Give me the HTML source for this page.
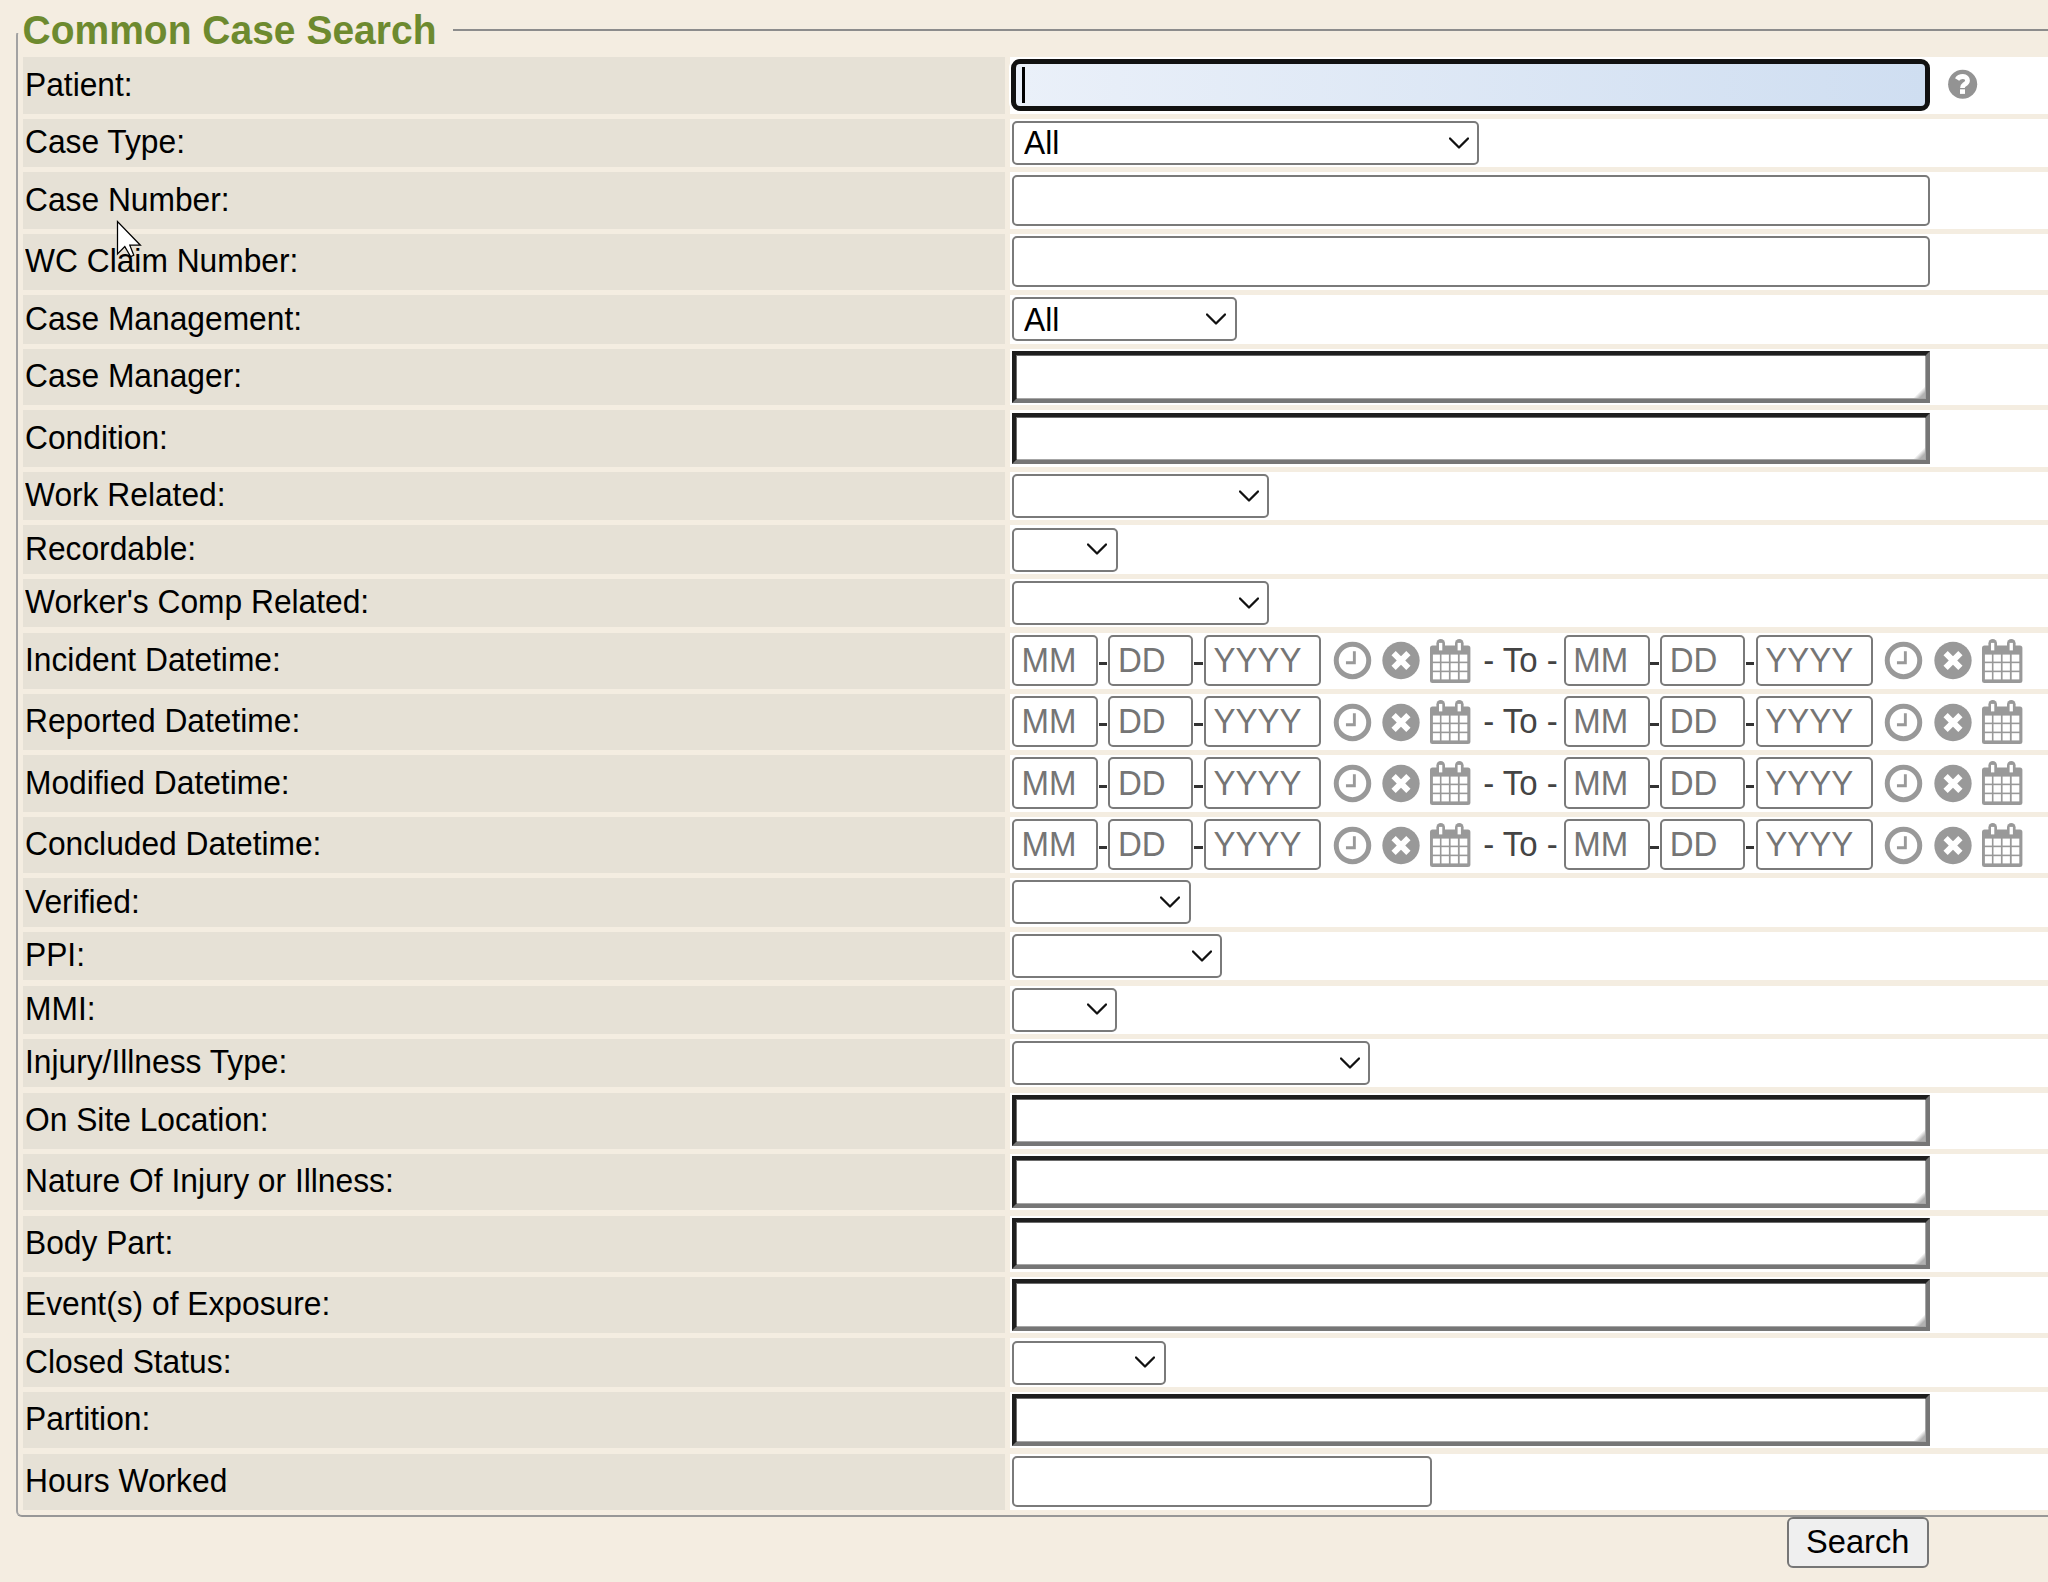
<!DOCTYPE html>
<html><head><meta charset="utf-8"><title>Common Case Search</title>
<style>
html,body{margin:0;padding:0;background:#f4ede1;}
body{width:2048px;height:1582px;overflow:hidden;}
#root{position:relative;width:2048px;height:1582px;overflow:hidden;background:#f4ede1;font-family:"Liberation Sans",sans-serif;color:#000;}
.a{position:absolute;}
.lc{position:absolute;left:22.5px;width:982.5px;background:#e6e1d6;}
.rc{position:absolute;left:1009.6px;width:1040px;background:#fff;}
.lb{position:absolute;left:25px;font-size:32px;line-height:36px;white-space:nowrap;transform:scale(0.992,1.04);transform-origin:0 28.5px;}
.sel{position:absolute;left:1012px;box-sizing:border-box;border:2px solid #7a7a7a;border-radius:5px;background:#fff;}
.txt{position:absolute;left:1012px;box-sizing:border-box;border:2px solid #7a7a7a;border-radius:5px;background:#fff;}
.ins{position:absolute;left:1012px;width:918px;box-sizing:border-box;border-style:solid;border-width:4px;border-color:#1e1e1e #767676 #767676 #1e1e1e;background:#fff;box-shadow:inset 1px 1px 0 rgba(30,30,30,0.65),inset -1px -1px 0 rgba(118,118,118,0.65);}
.grip{position:absolute;right:0;bottom:0;width:0;height:0;}
.ph{position:absolute;font-size:33px;line-height:36px;color:#757575;white-space:nowrap;transform:scaleY(1.04);transform-origin:0 28.5px;}
.dash{position:absolute;height:3px;width:8.3px;background:#333;}
.to{position:absolute;font-size:33px;line-height:36px;color:#444;white-space:nowrap;transform:scaleY(1.04);transform-origin:0 28.5px;}
</style></head><body><div id="root">

<div class="a" style="left:16px;top:29px;width:2100px;height:1488px;box-sizing:border-box;border:2px solid;border-color:#8c8c8c #999 #979797 #a2a2a2;border-radius:6px"></div>
<div class="a" style="left:12px;top:26px;width:441px;height:7px;background:#f4ede1"></div>
<div class="a" style="left:22.5px;top:8px;font-size:39px;line-height:45px;font-weight:bold;color:#6d8a2f;white-space:nowrap;transform:scaleY(1.04);transform-origin:0 36px">Common Case Search</div>
<div class="lc" style="top:57.45px;height:56.19px"></div>
<div class="rc" style="top:57.45px;height:56.19px"></div>
<div class="lb" style="top:66.69px">Patient:</div>
<div class="a" style="left:1011.3px;top:58.9px;width:918.7px;height:52px;box-sizing:border-box;border:5px solid #111;border-radius:9px;box-shadow:0 0 0 2px #fff;background:linear-gradient(to right,#eaf0f9,#cfdef1)"></div>
<div class="a" style="left:1022px;top:67px;width:2.5px;height:36px;background:#000"></div>
<svg class="a" style="left:1946px;top:68px" width="33" height="33" viewBox="-16.5 -16.5 33 33"><circle cx="0.15" cy="-0.3" r="14.55" fill="#939393"/><path d="M-5.4 -5 C-4 -7.4 -1.8 -8 0.4 -8 C3.4 -8 5 -6 5 -4 C5 -1.6 3 -0.6 1.4 0.5 C0 1.4 0 2.2 0 3.6" fill="none" stroke="#fff" stroke-width="4.8"/><rect x="-2.5" y="4.8" width="5" height="4.6" fill="#fff"/></svg>
<div class="lc" style="top:118.89px;height:48.35px"></div>
<div class="rc" style="top:118.89px;height:48.35px"></div>
<div class="lb" style="top:124.21px">Case Type:</div>
<div class="sel" style="top:120.99px;width:466.7px;height:44px"></div>
<svg class="a" style="left:1448.55px;top:136.69px" width="20" height="14" viewBox="0 0 20 14"><path d="M1 1.5 L10 10.5 L19 1.5" fill="none" stroke="#111" stroke-width="2.3" stroke-linecap="round" stroke-linejoin="round"/></svg>
<div class="lb" style="left:1024px;top:125.44px">All</div>
<div class="lc" style="top:172.48px;height:56.19px"></div>
<div class="rc" style="top:172.48px;height:56.19px"></div>
<div class="lb" style="top:181.73px">Case Number:</div>
<div class="txt" style="top:174.78px;width:918px;height:51px"></div>
<div class="lc" style="top:233.92px;height:56.19px"></div>
<div class="rc" style="top:233.92px;height:56.19px"></div>
<div class="lb" style="top:243.16px">WC Claim Number:</div>
<div class="txt" style="top:236.22px;width:918px;height:51px"></div>
<div class="lc" style="top:295.36px;height:48.35px"></div>
<div class="rc" style="top:295.36px;height:48.35px"></div>
<div class="lb" style="top:300.68px">Case Management:</div>
<div class="sel" style="top:297.46px;width:224.5px;height:44px"></div>
<svg class="a" style="left:1206.35px;top:313.16px" width="20" height="14" viewBox="0 0 20 14"><path d="M1 1.5 L10 10.5 L19 1.5" fill="none" stroke="#111" stroke-width="2.3" stroke-linecap="round" stroke-linejoin="round"/></svg>
<div class="lb" style="left:1024px;top:301.91px">All</div>
<div class="lc" style="top:348.95px;height:56.19px"></div>
<div class="rc" style="top:348.95px;height:56.19px"></div>
<div class="lb" style="top:358.2px">Case Manager:</div>
<div class="ins" style="top:351.15px;height:51.5px"><svg class="a" style="right:1px;bottom:1px" width="12" height="12" viewBox="0 0 13 13"><defs><linearGradient id="gg6" x1="0" y1="0" x2="1" y2="1"><stop offset="0.5" stop-color="#fff"/><stop offset="0.78" stop-color="#b0b0b0"/><stop offset="1" stop-color="#b0b0b0"/></linearGradient></defs><path d="M13 0 L13 13 L0 13 Z" fill="url(#gg6)"/></svg></div>
<div class="lc" style="top:410.39px;height:56.19px"></div>
<div class="rc" style="top:410.39px;height:56.19px"></div>
<div class="lb" style="top:419.63px">Condition:</div>
<div class="ins" style="top:412.59px;height:51.5px"><svg class="a" style="right:1px;bottom:1px" width="12" height="12" viewBox="0 0 13 13"><defs><linearGradient id="gg7" x1="0" y1="0" x2="1" y2="1"><stop offset="0.5" stop-color="#fff"/><stop offset="0.78" stop-color="#b0b0b0"/><stop offset="1" stop-color="#b0b0b0"/></linearGradient></defs><path d="M13 0 L13 13 L0 13 Z" fill="url(#gg7)"/></svg></div>
<div class="lc" style="top:471.82px;height:48.35px"></div>
<div class="rc" style="top:471.82px;height:48.35px"></div>
<div class="lb" style="top:477.15px">Work Related:</div>
<div class="sel" style="top:473.92px;width:256.7px;height:44px"></div>
<svg class="a" style="left:1238.55px;top:489.62px" width="20" height="14" viewBox="0 0 20 14"><path d="M1 1.5 L10 10.5 L19 1.5" fill="none" stroke="#111" stroke-width="2.3" stroke-linecap="round" stroke-linejoin="round"/></svg>
<div class="lc" style="top:525.42px;height:48.35px"></div>
<div class="rc" style="top:525.42px;height:48.35px"></div>
<div class="lb" style="top:530.75px">Recordable:</div>
<div class="sel" style="top:527.52px;width:105.6px;height:44px"></div>
<svg class="a" style="left:1087.45px;top:543.22px" width="20" height="14" viewBox="0 0 20 14"><path d="M1 1.5 L10 10.5 L19 1.5" fill="none" stroke="#111" stroke-width="2.3" stroke-linecap="round" stroke-linejoin="round"/></svg>
<div class="lc" style="top:579.02px;height:48.35px"></div>
<div class="rc" style="top:579.02px;height:48.35px"></div>
<div class="lb" style="top:584.34px">Worker's Comp Related:</div>
<div class="sel" style="top:581.12px;width:256.7px;height:44px"></div>
<svg class="a" style="left:1238.55px;top:596.82px" width="20" height="14" viewBox="0 0 20 14"><path d="M1 1.5 L10 10.5 L19 1.5" fill="none" stroke="#111" stroke-width="2.3" stroke-linecap="round" stroke-linejoin="round"/></svg>
<div class="lc" style="top:632.61px;height:56.19px"></div>
<div class="rc" style="top:632.61px;height:56.19px"></div>
<div class="lb" style="top:641.86px">Incident Datetime:</div>
<div class="txt" style="left:1012px;top:634.61px;width:86px;height:51.3px"></div>
<div class="ph" style="left:1021.5px;top:642.76px">MM</div>
<div class="txt" style="left:1108.4px;top:634.61px;width:84.6px;height:51.3px"></div>
<div class="ph" style="left:1117.9px;top:642.76px">DD</div>
<div class="txt" style="left:1203.9px;top:634.61px;width:116.9px;height:51.3px"></div>
<div class="ph" style="left:1213.4px;top:642.76px">YYYY</div>
<div class="dash" style="left:1098.6px;top:662.01px"></div>
<div class="dash" style="left:1194.3px;top:662.01px"></div>
<svg class="a" style="left:1332.5px;top:640.41px" width="40" height="40" viewBox="-20 -20 40 40"><circle cx="-0.5" cy="0.4" r="16.25" fill="none" stroke="#999" stroke-width="5"/><path d="M-7.05 2.7 H1.35 V-8.8" fill="none" stroke="#999" stroke-width="2.9"/></svg>
<svg class="a" style="left:1381.2px;top:640.41px" width="40" height="40" viewBox="-20 -20 40 40"><circle cx="0" cy="0.5" r="18.65" fill="#999"/><path d="M-7.4 -6.9 L7.4 7.9 M7.4 -6.9 L-7.4 7.9" fill="none" stroke="#fff" stroke-width="6"/></svg>
<svg class="a" style="left:1430px;top:637.61px" width="42" height="46" viewBox="0 0 42 46"><rect x="0" y="7.6" width="40.4" height="37.3" rx="2.5" fill="#999"/><rect x="6.4" y="1" width="8.6" height="12.2" rx="4.3" fill="#999"/><rect x="25" y="1" width="8.6" height="12.2" rx="4.3" fill="#999"/><rect x="9" y="4.9" width="3.3" height="7.5" fill="#fff"/><rect x="27.6" y="4.9" width="3.3" height="7.5" fill="#fff"/><rect x="2.9" y="16.6" width="7" height="7" fill="#fff"/><rect x="2.9" y="25.2" width="7" height="7.4" fill="#fff"/><rect x="2.9" y="34.2" width="7" height="7.2" fill="#fff"/><rect x="11.5" y="16.6" width="7.4" height="7" fill="#fff"/><rect x="11.5" y="25.2" width="7.4" height="7.4" fill="#fff"/><rect x="11.5" y="34.2" width="7.4" height="7.2" fill="#fff"/><rect x="20.6" y="16.6" width="7.3" height="7" fill="#fff"/><rect x="20.6" y="25.2" width="7.3" height="7.4" fill="#fff"/><rect x="20.6" y="34.2" width="7.3" height="7.2" fill="#fff"/><rect x="29.7" y="16.6" width="7.6" height="7" fill="#fff"/><rect x="29.7" y="25.2" width="7.6" height="7.4" fill="#fff"/><rect x="29.7" y="34.2" width="7.6" height="7.2" fill="#fff"/></svg>
<div class="txt" style="left:1563.75px;top:634.61px;width:86px;height:51.3px"></div>
<div class="ph" style="left:1573.25px;top:642.76px">MM</div>
<div class="txt" style="left:1660.15px;top:634.61px;width:84.6px;height:51.3px"></div>
<div class="ph" style="left:1669.65px;top:642.76px">DD</div>
<div class="txt" style="left:1755.65px;top:634.61px;width:116.9px;height:51.3px"></div>
<div class="ph" style="left:1765.15px;top:642.76px">YYYY</div>
<div class="dash" style="left:1650.35px;top:662.01px"></div>
<div class="dash" style="left:1746.05px;top:662.01px"></div>
<svg class="a" style="left:1884.25px;top:640.41px" width="40" height="40" viewBox="-20 -20 40 40"><circle cx="-0.5" cy="0.4" r="16.25" fill="none" stroke="#999" stroke-width="5"/><path d="M-7.05 2.7 H1.35 V-8.8" fill="none" stroke="#999" stroke-width="2.9"/></svg>
<svg class="a" style="left:1932.95px;top:640.41px" width="40" height="40" viewBox="-20 -20 40 40"><circle cx="0" cy="0.5" r="18.65" fill="#999"/><path d="M-7.4 -6.9 L7.4 7.9 M7.4 -6.9 L-7.4 7.9" fill="none" stroke="#fff" stroke-width="6"/></svg>
<svg class="a" style="left:1981.75px;top:637.61px" width="42" height="46" viewBox="0 0 42 46"><rect x="0" y="7.6" width="40.4" height="37.3" rx="2.5" fill="#999"/><rect x="6.4" y="1" width="8.6" height="12.2" rx="4.3" fill="#999"/><rect x="25" y="1" width="8.6" height="12.2" rx="4.3" fill="#999"/><rect x="9" y="4.9" width="3.3" height="7.5" fill="#fff"/><rect x="27.6" y="4.9" width="3.3" height="7.5" fill="#fff"/><rect x="2.9" y="16.6" width="7" height="7" fill="#fff"/><rect x="2.9" y="25.2" width="7" height="7.4" fill="#fff"/><rect x="2.9" y="34.2" width="7" height="7.2" fill="#fff"/><rect x="11.5" y="16.6" width="7.4" height="7" fill="#fff"/><rect x="11.5" y="25.2" width="7.4" height="7.4" fill="#fff"/><rect x="11.5" y="34.2" width="7.4" height="7.2" fill="#fff"/><rect x="20.6" y="16.6" width="7.3" height="7" fill="#fff"/><rect x="20.6" y="25.2" width="7.3" height="7.4" fill="#fff"/><rect x="20.6" y="34.2" width="7.3" height="7.2" fill="#fff"/><rect x="29.7" y="16.6" width="7.6" height="7" fill="#fff"/><rect x="29.7" y="25.2" width="7.6" height="7.4" fill="#fff"/><rect x="29.7" y="34.2" width="7.6" height="7.2" fill="#fff"/></svg>
<div class="to" style="left:1474px;top:642.76px">&nbsp;- To -</div>
<div class="lc" style="top:694.05px;height:56.19px"></div>
<div class="rc" style="top:694.05px;height:56.19px"></div>
<div class="lb" style="top:703.3px">Reported Datetime:</div>
<div class="txt" style="left:1012px;top:696.05px;width:86px;height:51.3px"></div>
<div class="ph" style="left:1021.5px;top:704.2px">MM</div>
<div class="txt" style="left:1108.4px;top:696.05px;width:84.6px;height:51.3px"></div>
<div class="ph" style="left:1117.9px;top:704.2px">DD</div>
<div class="txt" style="left:1203.9px;top:696.05px;width:116.9px;height:51.3px"></div>
<div class="ph" style="left:1213.4px;top:704.2px">YYYY</div>
<div class="dash" style="left:1098.6px;top:723.45px"></div>
<div class="dash" style="left:1194.3px;top:723.45px"></div>
<svg class="a" style="left:1332.5px;top:701.85px" width="40" height="40" viewBox="-20 -20 40 40"><circle cx="-0.5" cy="0.4" r="16.25" fill="none" stroke="#999" stroke-width="5"/><path d="M-7.05 2.7 H1.35 V-8.8" fill="none" stroke="#999" stroke-width="2.9"/></svg>
<svg class="a" style="left:1381.2px;top:701.85px" width="40" height="40" viewBox="-20 -20 40 40"><circle cx="0" cy="0.5" r="18.65" fill="#999"/><path d="M-7.4 -6.9 L7.4 7.9 M7.4 -6.9 L-7.4 7.9" fill="none" stroke="#fff" stroke-width="6"/></svg>
<svg class="a" style="left:1430px;top:699.05px" width="42" height="46" viewBox="0 0 42 46"><rect x="0" y="7.6" width="40.4" height="37.3" rx="2.5" fill="#999"/><rect x="6.4" y="1" width="8.6" height="12.2" rx="4.3" fill="#999"/><rect x="25" y="1" width="8.6" height="12.2" rx="4.3" fill="#999"/><rect x="9" y="4.9" width="3.3" height="7.5" fill="#fff"/><rect x="27.6" y="4.9" width="3.3" height="7.5" fill="#fff"/><rect x="2.9" y="16.6" width="7" height="7" fill="#fff"/><rect x="2.9" y="25.2" width="7" height="7.4" fill="#fff"/><rect x="2.9" y="34.2" width="7" height="7.2" fill="#fff"/><rect x="11.5" y="16.6" width="7.4" height="7" fill="#fff"/><rect x="11.5" y="25.2" width="7.4" height="7.4" fill="#fff"/><rect x="11.5" y="34.2" width="7.4" height="7.2" fill="#fff"/><rect x="20.6" y="16.6" width="7.3" height="7" fill="#fff"/><rect x="20.6" y="25.2" width="7.3" height="7.4" fill="#fff"/><rect x="20.6" y="34.2" width="7.3" height="7.2" fill="#fff"/><rect x="29.7" y="16.6" width="7.6" height="7" fill="#fff"/><rect x="29.7" y="25.2" width="7.6" height="7.4" fill="#fff"/><rect x="29.7" y="34.2" width="7.6" height="7.2" fill="#fff"/></svg>
<div class="txt" style="left:1563.75px;top:696.05px;width:86px;height:51.3px"></div>
<div class="ph" style="left:1573.25px;top:704.2px">MM</div>
<div class="txt" style="left:1660.15px;top:696.05px;width:84.6px;height:51.3px"></div>
<div class="ph" style="left:1669.65px;top:704.2px">DD</div>
<div class="txt" style="left:1755.65px;top:696.05px;width:116.9px;height:51.3px"></div>
<div class="ph" style="left:1765.15px;top:704.2px">YYYY</div>
<div class="dash" style="left:1650.35px;top:723.45px"></div>
<div class="dash" style="left:1746.05px;top:723.45px"></div>
<svg class="a" style="left:1884.25px;top:701.85px" width="40" height="40" viewBox="-20 -20 40 40"><circle cx="-0.5" cy="0.4" r="16.25" fill="none" stroke="#999" stroke-width="5"/><path d="M-7.05 2.7 H1.35 V-8.8" fill="none" stroke="#999" stroke-width="2.9"/></svg>
<svg class="a" style="left:1932.95px;top:701.85px" width="40" height="40" viewBox="-20 -20 40 40"><circle cx="0" cy="0.5" r="18.65" fill="#999"/><path d="M-7.4 -6.9 L7.4 7.9 M7.4 -6.9 L-7.4 7.9" fill="none" stroke="#fff" stroke-width="6"/></svg>
<svg class="a" style="left:1981.75px;top:699.05px" width="42" height="46" viewBox="0 0 42 46"><rect x="0" y="7.6" width="40.4" height="37.3" rx="2.5" fill="#999"/><rect x="6.4" y="1" width="8.6" height="12.2" rx="4.3" fill="#999"/><rect x="25" y="1" width="8.6" height="12.2" rx="4.3" fill="#999"/><rect x="9" y="4.9" width="3.3" height="7.5" fill="#fff"/><rect x="27.6" y="4.9" width="3.3" height="7.5" fill="#fff"/><rect x="2.9" y="16.6" width="7" height="7" fill="#fff"/><rect x="2.9" y="25.2" width="7" height="7.4" fill="#fff"/><rect x="2.9" y="34.2" width="7" height="7.2" fill="#fff"/><rect x="11.5" y="16.6" width="7.4" height="7" fill="#fff"/><rect x="11.5" y="25.2" width="7.4" height="7.4" fill="#fff"/><rect x="11.5" y="34.2" width="7.4" height="7.2" fill="#fff"/><rect x="20.6" y="16.6" width="7.3" height="7" fill="#fff"/><rect x="20.6" y="25.2" width="7.3" height="7.4" fill="#fff"/><rect x="20.6" y="34.2" width="7.3" height="7.2" fill="#fff"/><rect x="29.7" y="16.6" width="7.6" height="7" fill="#fff"/><rect x="29.7" y="25.2" width="7.6" height="7.4" fill="#fff"/><rect x="29.7" y="34.2" width="7.6" height="7.2" fill="#fff"/></svg>
<div class="to" style="left:1474px;top:704.2px">&nbsp;- To -</div>
<div class="lc" style="top:755.49px;height:56.19px"></div>
<div class="rc" style="top:755.49px;height:56.19px"></div>
<div class="lb" style="top:764.73px">Modified Datetime:</div>
<div class="txt" style="left:1012px;top:757.49px;width:86px;height:51.3px"></div>
<div class="ph" style="left:1021.5px;top:765.64px">MM</div>
<div class="txt" style="left:1108.4px;top:757.49px;width:84.6px;height:51.3px"></div>
<div class="ph" style="left:1117.9px;top:765.64px">DD</div>
<div class="txt" style="left:1203.9px;top:757.49px;width:116.9px;height:51.3px"></div>
<div class="ph" style="left:1213.4px;top:765.64px">YYYY</div>
<div class="dash" style="left:1098.6px;top:784.89px"></div>
<div class="dash" style="left:1194.3px;top:784.89px"></div>
<svg class="a" style="left:1332.5px;top:763.29px" width="40" height="40" viewBox="-20 -20 40 40"><circle cx="-0.5" cy="0.4" r="16.25" fill="none" stroke="#999" stroke-width="5"/><path d="M-7.05 2.7 H1.35 V-8.8" fill="none" stroke="#999" stroke-width="2.9"/></svg>
<svg class="a" style="left:1381.2px;top:763.29px" width="40" height="40" viewBox="-20 -20 40 40"><circle cx="0" cy="0.5" r="18.65" fill="#999"/><path d="M-7.4 -6.9 L7.4 7.9 M7.4 -6.9 L-7.4 7.9" fill="none" stroke="#fff" stroke-width="6"/></svg>
<svg class="a" style="left:1430px;top:760.49px" width="42" height="46" viewBox="0 0 42 46"><rect x="0" y="7.6" width="40.4" height="37.3" rx="2.5" fill="#999"/><rect x="6.4" y="1" width="8.6" height="12.2" rx="4.3" fill="#999"/><rect x="25" y="1" width="8.6" height="12.2" rx="4.3" fill="#999"/><rect x="9" y="4.9" width="3.3" height="7.5" fill="#fff"/><rect x="27.6" y="4.9" width="3.3" height="7.5" fill="#fff"/><rect x="2.9" y="16.6" width="7" height="7" fill="#fff"/><rect x="2.9" y="25.2" width="7" height="7.4" fill="#fff"/><rect x="2.9" y="34.2" width="7" height="7.2" fill="#fff"/><rect x="11.5" y="16.6" width="7.4" height="7" fill="#fff"/><rect x="11.5" y="25.2" width="7.4" height="7.4" fill="#fff"/><rect x="11.5" y="34.2" width="7.4" height="7.2" fill="#fff"/><rect x="20.6" y="16.6" width="7.3" height="7" fill="#fff"/><rect x="20.6" y="25.2" width="7.3" height="7.4" fill="#fff"/><rect x="20.6" y="34.2" width="7.3" height="7.2" fill="#fff"/><rect x="29.7" y="16.6" width="7.6" height="7" fill="#fff"/><rect x="29.7" y="25.2" width="7.6" height="7.4" fill="#fff"/><rect x="29.7" y="34.2" width="7.6" height="7.2" fill="#fff"/></svg>
<div class="txt" style="left:1563.75px;top:757.49px;width:86px;height:51.3px"></div>
<div class="ph" style="left:1573.25px;top:765.64px">MM</div>
<div class="txt" style="left:1660.15px;top:757.49px;width:84.6px;height:51.3px"></div>
<div class="ph" style="left:1669.65px;top:765.64px">DD</div>
<div class="txt" style="left:1755.65px;top:757.49px;width:116.9px;height:51.3px"></div>
<div class="ph" style="left:1765.15px;top:765.64px">YYYY</div>
<div class="dash" style="left:1650.35px;top:784.89px"></div>
<div class="dash" style="left:1746.05px;top:784.89px"></div>
<svg class="a" style="left:1884.25px;top:763.29px" width="40" height="40" viewBox="-20 -20 40 40"><circle cx="-0.5" cy="0.4" r="16.25" fill="none" stroke="#999" stroke-width="5"/><path d="M-7.05 2.7 H1.35 V-8.8" fill="none" stroke="#999" stroke-width="2.9"/></svg>
<svg class="a" style="left:1932.95px;top:763.29px" width="40" height="40" viewBox="-20 -20 40 40"><circle cx="0" cy="0.5" r="18.65" fill="#999"/><path d="M-7.4 -6.9 L7.4 7.9 M7.4 -6.9 L-7.4 7.9" fill="none" stroke="#fff" stroke-width="6"/></svg>
<svg class="a" style="left:1981.75px;top:760.49px" width="42" height="46" viewBox="0 0 42 46"><rect x="0" y="7.6" width="40.4" height="37.3" rx="2.5" fill="#999"/><rect x="6.4" y="1" width="8.6" height="12.2" rx="4.3" fill="#999"/><rect x="25" y="1" width="8.6" height="12.2" rx="4.3" fill="#999"/><rect x="9" y="4.9" width="3.3" height="7.5" fill="#fff"/><rect x="27.6" y="4.9" width="3.3" height="7.5" fill="#fff"/><rect x="2.9" y="16.6" width="7" height="7" fill="#fff"/><rect x="2.9" y="25.2" width="7" height="7.4" fill="#fff"/><rect x="2.9" y="34.2" width="7" height="7.2" fill="#fff"/><rect x="11.5" y="16.6" width="7.4" height="7" fill="#fff"/><rect x="11.5" y="25.2" width="7.4" height="7.4" fill="#fff"/><rect x="11.5" y="34.2" width="7.4" height="7.2" fill="#fff"/><rect x="20.6" y="16.6" width="7.3" height="7" fill="#fff"/><rect x="20.6" y="25.2" width="7.3" height="7.4" fill="#fff"/><rect x="20.6" y="34.2" width="7.3" height="7.2" fill="#fff"/><rect x="29.7" y="16.6" width="7.6" height="7" fill="#fff"/><rect x="29.7" y="25.2" width="7.6" height="7.4" fill="#fff"/><rect x="29.7" y="34.2" width="7.6" height="7.2" fill="#fff"/></svg>
<div class="to" style="left:1474px;top:765.64px">&nbsp;- To -</div>
<div class="lc" style="top:816.92px;height:56.19px"></div>
<div class="rc" style="top:816.92px;height:56.19px"></div>
<div class="lb" style="top:826.17px">Concluded Datetime:</div>
<div class="txt" style="left:1012px;top:818.92px;width:86px;height:51.3px"></div>
<div class="ph" style="left:1021.5px;top:827.07px">MM</div>
<div class="txt" style="left:1108.4px;top:818.92px;width:84.6px;height:51.3px"></div>
<div class="ph" style="left:1117.9px;top:827.07px">DD</div>
<div class="txt" style="left:1203.9px;top:818.92px;width:116.9px;height:51.3px"></div>
<div class="ph" style="left:1213.4px;top:827.07px">YYYY</div>
<div class="dash" style="left:1098.6px;top:846.32px"></div>
<div class="dash" style="left:1194.3px;top:846.32px"></div>
<svg class="a" style="left:1332.5px;top:824.72px" width="40" height="40" viewBox="-20 -20 40 40"><circle cx="-0.5" cy="0.4" r="16.25" fill="none" stroke="#999" stroke-width="5"/><path d="M-7.05 2.7 H1.35 V-8.8" fill="none" stroke="#999" stroke-width="2.9"/></svg>
<svg class="a" style="left:1381.2px;top:824.72px" width="40" height="40" viewBox="-20 -20 40 40"><circle cx="0" cy="0.5" r="18.65" fill="#999"/><path d="M-7.4 -6.9 L7.4 7.9 M7.4 -6.9 L-7.4 7.9" fill="none" stroke="#fff" stroke-width="6"/></svg>
<svg class="a" style="left:1430px;top:821.92px" width="42" height="46" viewBox="0 0 42 46"><rect x="0" y="7.6" width="40.4" height="37.3" rx="2.5" fill="#999"/><rect x="6.4" y="1" width="8.6" height="12.2" rx="4.3" fill="#999"/><rect x="25" y="1" width="8.6" height="12.2" rx="4.3" fill="#999"/><rect x="9" y="4.9" width="3.3" height="7.5" fill="#fff"/><rect x="27.6" y="4.9" width="3.3" height="7.5" fill="#fff"/><rect x="2.9" y="16.6" width="7" height="7" fill="#fff"/><rect x="2.9" y="25.2" width="7" height="7.4" fill="#fff"/><rect x="2.9" y="34.2" width="7" height="7.2" fill="#fff"/><rect x="11.5" y="16.6" width="7.4" height="7" fill="#fff"/><rect x="11.5" y="25.2" width="7.4" height="7.4" fill="#fff"/><rect x="11.5" y="34.2" width="7.4" height="7.2" fill="#fff"/><rect x="20.6" y="16.6" width="7.3" height="7" fill="#fff"/><rect x="20.6" y="25.2" width="7.3" height="7.4" fill="#fff"/><rect x="20.6" y="34.2" width="7.3" height="7.2" fill="#fff"/><rect x="29.7" y="16.6" width="7.6" height="7" fill="#fff"/><rect x="29.7" y="25.2" width="7.6" height="7.4" fill="#fff"/><rect x="29.7" y="34.2" width="7.6" height="7.2" fill="#fff"/></svg>
<div class="txt" style="left:1563.75px;top:818.92px;width:86px;height:51.3px"></div>
<div class="ph" style="left:1573.25px;top:827.07px">MM</div>
<div class="txt" style="left:1660.15px;top:818.92px;width:84.6px;height:51.3px"></div>
<div class="ph" style="left:1669.65px;top:827.07px">DD</div>
<div class="txt" style="left:1755.65px;top:818.92px;width:116.9px;height:51.3px"></div>
<div class="ph" style="left:1765.15px;top:827.07px">YYYY</div>
<div class="dash" style="left:1650.35px;top:846.32px"></div>
<div class="dash" style="left:1746.05px;top:846.32px"></div>
<svg class="a" style="left:1884.25px;top:824.72px" width="40" height="40" viewBox="-20 -20 40 40"><circle cx="-0.5" cy="0.4" r="16.25" fill="none" stroke="#999" stroke-width="5"/><path d="M-7.05 2.7 H1.35 V-8.8" fill="none" stroke="#999" stroke-width="2.9"/></svg>
<svg class="a" style="left:1932.95px;top:824.72px" width="40" height="40" viewBox="-20 -20 40 40"><circle cx="0" cy="0.5" r="18.65" fill="#999"/><path d="M-7.4 -6.9 L7.4 7.9 M7.4 -6.9 L-7.4 7.9" fill="none" stroke="#fff" stroke-width="6"/></svg>
<svg class="a" style="left:1981.75px;top:821.92px" width="42" height="46" viewBox="0 0 42 46"><rect x="0" y="7.6" width="40.4" height="37.3" rx="2.5" fill="#999"/><rect x="6.4" y="1" width="8.6" height="12.2" rx="4.3" fill="#999"/><rect x="25" y="1" width="8.6" height="12.2" rx="4.3" fill="#999"/><rect x="9" y="4.9" width="3.3" height="7.5" fill="#fff"/><rect x="27.6" y="4.9" width="3.3" height="7.5" fill="#fff"/><rect x="2.9" y="16.6" width="7" height="7" fill="#fff"/><rect x="2.9" y="25.2" width="7" height="7.4" fill="#fff"/><rect x="2.9" y="34.2" width="7" height="7.2" fill="#fff"/><rect x="11.5" y="16.6" width="7.4" height="7" fill="#fff"/><rect x="11.5" y="25.2" width="7.4" height="7.4" fill="#fff"/><rect x="11.5" y="34.2" width="7.4" height="7.2" fill="#fff"/><rect x="20.6" y="16.6" width="7.3" height="7" fill="#fff"/><rect x="20.6" y="25.2" width="7.3" height="7.4" fill="#fff"/><rect x="20.6" y="34.2" width="7.3" height="7.2" fill="#fff"/><rect x="29.7" y="16.6" width="7.6" height="7" fill="#fff"/><rect x="29.7" y="25.2" width="7.6" height="7.4" fill="#fff"/><rect x="29.7" y="34.2" width="7.6" height="7.2" fill="#fff"/></svg>
<div class="to" style="left:1474px;top:827.07px">&nbsp;- To -</div>
<div class="lc" style="top:878.36px;height:48.35px"></div>
<div class="rc" style="top:878.36px;height:48.35px"></div>
<div class="lb" style="top:883.69px">Verified:</div>
<div class="sel" style="top:880.46px;width:178.6px;height:44px"></div>
<svg class="a" style="left:1160.45px;top:896.16px" width="20" height="14" viewBox="0 0 20 14"><path d="M1 1.5 L10 10.5 L19 1.5" fill="none" stroke="#111" stroke-width="2.3" stroke-linecap="round" stroke-linejoin="round"/></svg>
<div class="lc" style="top:931.96px;height:48.35px"></div>
<div class="rc" style="top:931.96px;height:48.35px"></div>
<div class="lb" style="top:937.28px">PPI:</div>
<div class="sel" style="top:934.06px;width:209.8px;height:44px"></div>
<svg class="a" style="left:1191.65px;top:949.76px" width="20" height="14" viewBox="0 0 20 14"><path d="M1 1.5 L10 10.5 L19 1.5" fill="none" stroke="#111" stroke-width="2.3" stroke-linecap="round" stroke-linejoin="round"/></svg>
<div class="lc" style="top:985.55px;height:48.35px"></div>
<div class="rc" style="top:985.55px;height:48.35px"></div>
<div class="lb" style="top:990.88px">MMI:</div>
<div class="sel" style="top:987.65px;width:105.4px;height:44px"></div>
<svg class="a" style="left:1087.25px;top:1003.35px" width="20" height="14" viewBox="0 0 20 14"><path d="M1 1.5 L10 10.5 L19 1.5" fill="none" stroke="#111" stroke-width="2.3" stroke-linecap="round" stroke-linejoin="round"/></svg>
<div class="lc" style="top:1039.15px;height:48.35px"></div>
<div class="rc" style="top:1039.15px;height:48.35px"></div>
<div class="lb" style="top:1044.48px">Injury/Illness Type:</div>
<div class="sel" style="top:1041.25px;width:358px;height:44px"></div>
<svg class="a" style="left:1339.85px;top:1056.95px" width="20" height="14" viewBox="0 0 20 14"><path d="M1 1.5 L10 10.5 L19 1.5" fill="none" stroke="#111" stroke-width="2.3" stroke-linecap="round" stroke-linejoin="round"/></svg>
<div class="lc" style="top:1092.75px;height:56.19px"></div>
<div class="rc" style="top:1092.75px;height:56.19px"></div>
<div class="lb" style="top:1101.99px">On Site Location:</div>
<div class="ins" style="top:1094.95px;height:51.5px"><svg class="a" style="right:1px;bottom:1px" width="12" height="12" viewBox="0 0 13 13"><defs><linearGradient id="gg19" x1="0" y1="0" x2="1" y2="1"><stop offset="0.5" stop-color="#fff"/><stop offset="0.78" stop-color="#b0b0b0"/><stop offset="1" stop-color="#b0b0b0"/></linearGradient></defs><path d="M13 0 L13 13 L0 13 Z" fill="url(#gg19)"/></svg></div>
<div class="lc" style="top:1154.18px;height:56.19px"></div>
<div class="rc" style="top:1154.18px;height:56.19px"></div>
<div class="lb" style="top:1163.43px">Nature Of Injury or Illness:</div>
<div class="ins" style="top:1156.38px;height:51.5px"><svg class="a" style="right:1px;bottom:1px" width="12" height="12" viewBox="0 0 13 13"><defs><linearGradient id="gg20" x1="0" y1="0" x2="1" y2="1"><stop offset="0.5" stop-color="#fff"/><stop offset="0.78" stop-color="#b0b0b0"/><stop offset="1" stop-color="#b0b0b0"/></linearGradient></defs><path d="M13 0 L13 13 L0 13 Z" fill="url(#gg20)"/></svg></div>
<div class="lc" style="top:1215.62px;height:56.19px"></div>
<div class="rc" style="top:1215.62px;height:56.19px"></div>
<div class="lb" style="top:1224.87px">Body Part:</div>
<div class="ins" style="top:1217.82px;height:51.5px"><svg class="a" style="right:1px;bottom:1px" width="12" height="12" viewBox="0 0 13 13"><defs><linearGradient id="gg21" x1="0" y1="0" x2="1" y2="1"><stop offset="0.5" stop-color="#fff"/><stop offset="0.78" stop-color="#b0b0b0"/><stop offset="1" stop-color="#b0b0b0"/></linearGradient></defs><path d="M13 0 L13 13 L0 13 Z" fill="url(#gg21)"/></svg></div>
<div class="lc" style="top:1277.06px;height:56.19px"></div>
<div class="rc" style="top:1277.06px;height:56.19px"></div>
<div class="lb" style="top:1286.3px">Event(s) of Exposure:</div>
<div class="ins" style="top:1279.26px;height:51.5px"><svg class="a" style="right:1px;bottom:1px" width="12" height="12" viewBox="0 0 13 13"><defs><linearGradient id="gg22" x1="0" y1="0" x2="1" y2="1"><stop offset="0.5" stop-color="#fff"/><stop offset="0.78" stop-color="#b0b0b0"/><stop offset="1" stop-color="#b0b0b0"/></linearGradient></defs><path d="M13 0 L13 13 L0 13 Z" fill="url(#gg22)"/></svg></div>
<div class="lc" style="top:1338.49px;height:48.35px"></div>
<div class="rc" style="top:1338.49px;height:48.35px"></div>
<div class="lb" style="top:1343.82px">Closed Status:</div>
<div class="sel" style="top:1340.59px;width:153.5px;height:44px"></div>
<svg class="a" style="left:1135.35px;top:1356.29px" width="20" height="14" viewBox="0 0 20 14"><path d="M1 1.5 L10 10.5 L19 1.5" fill="none" stroke="#111" stroke-width="2.3" stroke-linecap="round" stroke-linejoin="round"/></svg>
<div class="lc" style="top:1392.09px;height:56.19px"></div>
<div class="rc" style="top:1392.09px;height:56.19px"></div>
<div class="lb" style="top:1401.34px">Partition:</div>
<div class="ins" style="top:1394.29px;height:51.5px"><svg class="a" style="right:1px;bottom:1px" width="12" height="12" viewBox="0 0 13 13"><defs><linearGradient id="gg24" x1="0" y1="0" x2="1" y2="1"><stop offset="0.5" stop-color="#fff"/><stop offset="0.78" stop-color="#b0b0b0"/><stop offset="1" stop-color="#b0b0b0"/></linearGradient></defs><path d="M13 0 L13 13 L0 13 Z" fill="url(#gg24)"/></svg></div>
<div class="lc" style="top:1453.53px;height:56.19px"></div>
<div class="rc" style="top:1453.53px;height:56.19px"></div>
<div class="lb" style="top:1462.77px">Hours Worked</div>
<div class="txt" style="top:1455.83px;width:420.4px;height:51px"></div>
<div class="a" style="left:1787px;top:1517px;width:142px;height:51px;box-sizing:border-box;border:2px solid #767676;border-radius:6px;background:#efefef"></div>
<div class="lb" style="left:1805.8px;top:1524px;transform:scale(1.02,1.04)">Search</div>
<svg class="a" style="left:110px;top:215px" width="40" height="50" viewBox="110 215 40 50"><path d="M117.5 221.5 L117.5 254 L124.8 246.6 L130.6 256.6 L133.8 255.2 L129.8 245.2 L140.4 245.2 Z" fill="#fff" stroke="#000" stroke-width="1.25" stroke-linejoin="miter"/></svg>
</div></body></html>
